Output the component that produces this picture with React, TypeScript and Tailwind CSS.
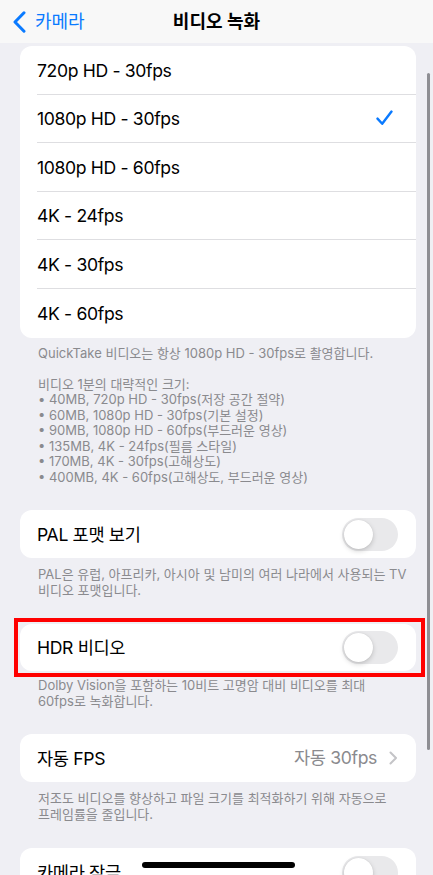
import { ReactNode } from "react";

const FONT = "font-['Inter','Noto_Sans_CJK_KR',sans-serif]";

function Toggle() {
  return (
    <div className="relative h-[33px] w-[56px] shrink-0 rounded-full bg-[#e9e9eb]">
      <div className="absolute left-[2px] top-[2px] h-[29px] w-[29px] rounded-full bg-white shadow-[0_2px_5px_rgba(0,0,0,0.18),0_0_1px_rgba(0,0,0,0.12)]" />
    </div>
  );
}

function Card({ children }: { children: ReactNode }) {
  return <div className="overflow-hidden rounded-[12px] bg-white">{children}</div>;
}

function Row({
  label,
  right,
  last,
  h = "h-[48.6px]",
}: {
  label: string;
  right?: ReactNode;
  last?: boolean;
  h?: string;
}) {
  return (
    <div className={`flex pl-[17px] ${h}`}>
      <div
        className={`flex flex-1 items-center justify-between pr-[18px] ${
          last ? "" : "border-b border-[#dedee1]"
        }`}
      >
        <span className="pt-[2px] text-[17.6px] tracking-[-0.35px] text-black">{label}</span>
        {right}
      </div>
    </div>
  );
}

function Footer({ children, pt = "pt-[9px]" }: { children: ReactNode; pt?: string }) {
  return (
    <div
      className={`px-[18px] ${pt} whitespace-nowrap text-[13px] leading-[15.5px] text-[#8a8a8e]`}
    >
      {children}
    </div>
  );
}

function Check() {
  return (
    <svg width="17" height="16" viewBox="0 0 17 16" className="mr-[5px]">
      <path
        d="M1.5 8.6 L6.2 13.8 L15.5 1.6"
        fill="none"
        stroke="#0a7aff"
        strokeWidth="2.4"
        strokeLinecap="round"
        strokeLinejoin="round"
      />
    </svg>
  );
}

export default function App() {
  const formats = [
    "720p HD - 30fps",
    "1080p HD - 30fps",
    "1080p HD - 60fps",
    "4K - 24fps",
    "4K - 30fps",
    "4K - 60fps",
  ];

  return (
    <div className={`relative h-[875px] w-[433px] overflow-hidden bg-[#efeff4] ${FONT}`}>
      {/* nav bar */}
      <div className="relative flex h-[43px] items-center bg-[#f8f8f8]">
        <div className="flex items-center pl-[13px] text-[#0a7aff]">
          <svg width="13" height="22" viewBox="0 0 13 22">
            <path
              d="M11 1.8 L2 11 L11 20.2"
              fill="none"
              stroke="#0a7aff"
              strokeWidth="3"
              strokeLinecap="round"
              strokeLinejoin="round"
            />
          </svg>
          <span className="ml-[9px] text-[18px]">카메라</span>
        </div>
        <div className="absolute inset-x-0 top-0 flex h-full items-center justify-center">
          <span className="text-[18px] font-semibold text-black">비디오 녹화</span>
        </div>
      </div>

      <div className="pl-[20px] pr-[17px] pt-[3px]">
        <Card>
          {formats.map((f, i) => (
            <Row
              key={f}
              label={f}
              last={i === formats.length - 1}
              right={i === 1 ? <Check /> : null}
            />
          ))}
        </Card>
        <Footer pt="pt-[8px]">
          QuickTake 비디오는 항상 1080p HD - 30fps로 촬영합니다.
          <br />
          <br />
          비디오 1분의 대략적인 크기:
          <br />• 40MB, 720p HD - 30fps(저장 공간 절약)
          <br />• 60MB, 1080p HD - 30fps(기본 설정)
          <br />• 90MB, 1080p HD - 60fps(부드러운 영상)
          <br />• 135MB, 4K - 24fps(필름 스타일)
          <br />• 170MB, 4K - 30fps(고해상도)
          <br />• 400MB, 4K - 60fps(고해상도, 부드러운 영상)
        </Footer>

        <div className="mt-[25px]">
          <Card>
            <Row label="PAL 포맷 보기" last h="h-[48px]" right={<Toggle />} />
          </Card>
          <Footer pt="pt-[9px]">
            PAL은 유럽, 아프리카, 아시아 및 남미의 여러 나라에서 사용되는 TV
            <br />
            비디오 포맷입니다.
          </Footer>
        </div>

        <div className="relative mt-[26px]">
          <div className="absolute -left-[6px] -right-[9px] -top-[6px] -bottom-[6px] border-[4px] border-[#ff0000]" />
          <Card>
            <Row label="HDR 비디오" last h="h-[47px]" right={<Toggle />} />
          </Card>
        </div>
        <Footer pt="pt-[7px]">
          Dolby Vision을 포함하는 10비트 고명암 대비 비디오를 최대
          <br />
          60fps로 녹화합니다.
        </Footer>

        <div className="mt-[25px]">
          <Card>
            <Row
              label="자동 FPS"
              last
              h="h-[48px]"
              right={
                <span className="flex items-center gap-[12px] text-[17.6px] tracking-[-0.35px] text-[#8a8a8e]">
                  자동 30fps
                  <svg width="9" height="14" viewBox="0 0 9 14">
                    <path
                      d="M1.5 1.5 L7 7 L1.5 12.5"
                      fill="none"
                      stroke="#c4c4c7"
                      strokeWidth="2"
                      strokeLinecap="round"
                      strokeLinejoin="round"
                    />
                  </svg>
                </span>
              }
            />
          </Card>
          <Footer>
            저조도 비디오를 향상하고 파일 크기를 최적화하기 위해 자동으로
            <br />
            프레임률을 줄입니다.
          </Footer>
        </div>

        <div className="mt-[26px]">
          <Card>
            <Row label="카메라 잠금" last h="h-[48px]" right={<Toggle />} />
          </Card>
        </div>
      </div>

      {/* scroll indicator */}
      <div className="absolute right-[3px] top-[73px] h-[677px] w-[3px] rounded-full bg-[#8e8e93]" />
      {/* home indicator */}
      <div className="absolute left-[142px] top-[862px] h-[6px] w-[153px] rounded-full bg-black" />
    </div>
  );
}
